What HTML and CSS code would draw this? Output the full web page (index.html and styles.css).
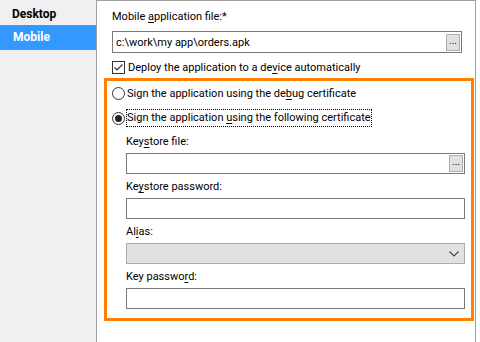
FILE: index.html
```html
<!DOCTYPE html>
<html lang="en">
<head>
  <meta charset="UTF-8">
  <title>Mobile settings</title>
  <link rel="stylesheet" href="styles.css">
</head>
<body>
  <div class="window">
    <ul class="side">
      <li class="first">Desktop</li>
      <li class="active">Mobile</li>
    </ul>
    <div class="panel">
      <div class="top">
        <div class="label">Mobile <u>a</u>pplication file:*</div>
        <div class="box">
          <span class="value">c:\work\my app\orders.apk</span>
          <span class="browse">...</span>
        </div>
        <div class="check">
          <span class="checkbox">
            <svg width="11" height="11" viewBox="0 0 11 11"><polyline points="1.5,5.5 4,8 9.5,2.5" fill="none" stroke="#333" stroke-width="1.2"/></svg>
          </span>
          <span>Deploy the application to a de<u>v</u>ice automatically</span>
        </div>
      </div>
      <div class="sign">
        <div class="radio">
          <span class="dot"></span>
          <span>Sign the application using the de<u>b</u>ug certificate</span>
        </div>
        <div class="radio">
          <span class="dot on"></span>
          <span class="focus">Sign the application <u>u</u>sing the following certificate</span>
        </div>
        <div class="fields">
          <div class="label">Key<u>s</u>tore file:</div>
          <div class="box">
            <span class="value"></span>
            <span class="browse">...</span>
          </div>
          <div class="label">Ke<u>y</u>store password:</div>
          <div class="box"></div>
          <div class="label">Al<u>i</u>as:</div>
          <div class="box select">
            <span class="value"></span>
            <svg width="10" height="6" viewBox="0 0 10 6"><polyline points="0.5,0.5 5,5 9.5,0.5" fill="none" stroke="#444" stroke-width="1.1"/></svg>
          </div>
          <div class="label">Key passwo<u>r</u>d:</div>
          <div class="box"></div>
        </div>
      </div>
    </div>
  </div>
</body>
</html>
```
FILE: styles.css
```css
body { margin: 0; background: #fff; font-family: Roboto, "Noto Sans", sans-serif; font-size: 11px; color: #000; }
u { text-decoration: underline; text-underline-offset: 2px; }

.window { display: flex; height: 342px; }
.side { width: 96px; margin: 0; padding: 0; list-style: none; background: #f0f0f0; border-right: 1px solid #a0a0a0; font-weight: bold; font-size: 12px; }
.side li { height: 25px; line-height: 25px; padding-left: 12px; }
.side li.first { height: 23px; padding-top: 2px; }
.side li.active { background: #3399ff; color: #fff; padding-left: 13px; }

.panel { width: 379px; border-top: 1px solid #a0a0a0; border-right: 1px solid #a0a0a0; padding: 8px 0 0 7px; box-sizing: border-box; }
.top { padding-left: 8px; padding-right: 13px; }
.top .label { margin-bottom: 6px; }
.top .box { height: 22px; }

.label { height: 16px; line-height: 16px; }
.box { height: 21px; box-sizing: border-box; border: 1px solid #7a7a7a; display: flex; align-items: center; justify-content: flex-end; padding: 0 1px 0 3px; }
.box .value { flex: 1; }
.browse { width: 14px; height: 17px; box-sizing: border-box; background: #e1e1e1; border: 1px solid #adadad; font-size: 10px; line-height: 12px; text-align: center; }
.select { background: #e1e1e1; border-color: #adadad; padding-right: 5px; }

.check { display: flex; align-items: center; gap: 3px; height: 16px; margin-top: 6px; }
.checkbox { width: 13px; height: 13px; box-sizing: border-box; border: 1px solid #333; display: flex; align-items: center; justify-content: center; }

.sign { width: 370px; margin-top: 3px; border: 3px solid #ff8000; box-sizing: border-box; padding: 3px 6px 9px 5px; }
.radio { display: flex; align-items: center; gap: 2px; height: 18px; margin-bottom: 7px; }
.dot { width: 13px; height: 13px; box-sizing: border-box; border: 1px solid #333; border-radius: 50%; display: flex; align-items: center; justify-content: center; }
.dot.on::after { content: ""; width: 7px; height: 7px; border-radius: 50%; background: #222; }
.focus { outline: 1px dotted #000; outline-offset: 0; line-height: 16px; }

.fields { margin: 2px 0 0 14px; }
.fields .label { margin-bottom: 3px; }
.fields .box { margin-bottom: 5px; }
.fields .box:last-child { margin-bottom: 0; }
```
